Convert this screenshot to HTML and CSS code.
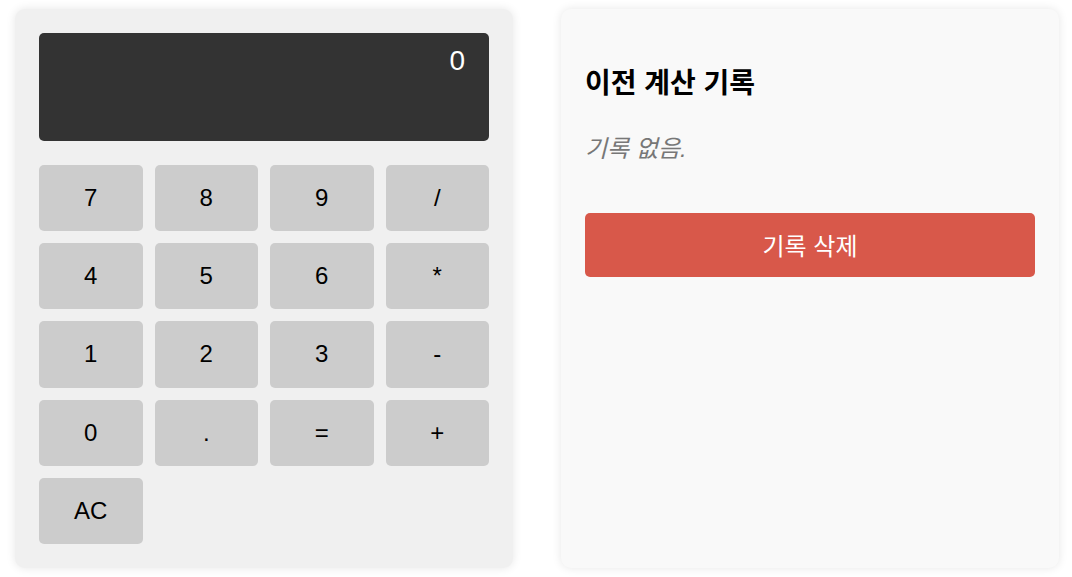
FILE: index.html
```html
<!DOCTYPE html>
<html lang="ko">
<head>
<meta charset="utf-8">
<title>계산기</title>
<link rel="stylesheet" href="styles.css">
</head>
<body>
<div class="app">
  <div class="calculator">
    <div class="display">0</div>
    <div class="keys">
      <button class="key">7</button>
      <button class="key">8</button>
      <button class="key">9</button>
      <button class="key">/</button>
      <button class="key">4</button>
      <button class="key">5</button>
      <button class="key">6</button>
      <button class="key">*</button>
      <button class="key">1</button>
      <button class="key">2</button>
      <button class="key">3</button>
      <button class="key">-</button>
      <button class="key">0</button>
      <button class="key">.</button>
      <button class="key">=</button>
      <button class="key">+</button>
      <button class="key">AC</button>
    </div>
  </div>
  <div class="history">
    <h2 class="history-title">이전 계산 기록</h2>
    <p class="history-empty">기록 없음.</p>
    <button class="clear-btn">기록 삭제</button>
  </div>
</div>
</body>
</html>
```
FILE: styles.css
```css
* { box-sizing: border-box; }
html, body { margin: 0; padding: 0; }
body {
  font-family: "Liberation Sans", Arial, "Noto Sans CJK KR", sans-serif;
  background: #ffffff;
  height: 577px;
  padding-left: 2px;
  display: flex;
  align-items: center;
  justify-content: center;
}
.app {
  display: flex;
  gap: 48px;
  align-items: stretch;
}
.calculator {
  width: 498px;
  background: #f0f0f0;
  border-radius: 10px;
  padding: 24px;
  box-shadow: 0 0 10px rgba(0, 0, 0, 0.1);
}
.display {
  height: 108px;
  background: #333333;
  color: #ffffff;
  border-radius: 5px;
  padding: 12px 24px;
  font-size: 28px;
  text-align: right;
  margin-bottom: 24px;
}
.keys {
  display: grid;
  grid-template-columns: repeat(4, 1fr);
  gap: 12px;
}
.key {
  height: 66.3px;
  border: none;
  background: #cccccc;
  border-radius: 5px;
  font-family: "Liberation Sans", Arial, sans-serif;
  font-size: 24px;
  color: #000000;
  padding: 0;
}
.history {
  width: 498px;
  background: #f9f9f9;
  border-radius: 10px;
  padding: 24px;
  box-shadow: 0 0 10px rgba(0, 0, 0, 0.1);
}
.history-title {
  margin: 33px 0 0;
  font-size: 28px;
  line-height: 36px;
  font-weight: bold;
  color: #000000;
}
.history-empty {
  margin: 31px 0 0;
  font-size: 24px;
  line-height: 32px;
  font-style: italic;
  color: #777777;
}
.clear-btn {
  display: block;
  width: 100%;
  height: 64px;
  margin-top: 48px;
  border: none;
  border-radius: 5px;
  background: #d8584a;
  color: #ffffff;
  font-family: "Liberation Sans", Arial, "Noto Sans CJK KR", sans-serif;
  font-size: 24px;
}
```
